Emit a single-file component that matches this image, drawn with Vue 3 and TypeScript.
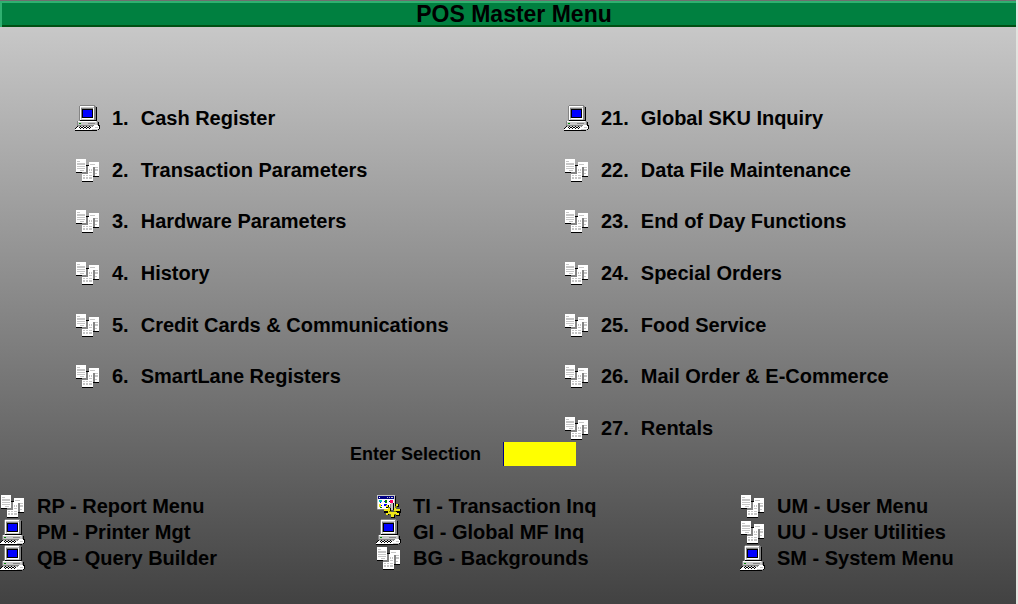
<script setup lang="ts">
import { ref } from 'vue'

type IconName = 'terminal' | 'papers' | 'inquiry'
interface Entry {
  code: string
  label: string
  icon: IconName
}
type Block = [x: number, y: number, w: number, h: number, fill: string]

const K = '#000000'
const W = '#ffffff'
const L = '#c6c6c6'
const G = '#848484'
const B = '#0000ff'
const N = '#000084'
const Y = '#f0e818'
const O = '#848400'

/* Icons are drawn on a 26 by 26 grid, one unit per pixel. */
const icons: Record<IconName, Block[]> = {
  terminal: [
    [5, 0, 15, 1, G], [4, 1, 1, 15, G], [5, 1, 15, 15, L], [5, 1, 14, 1, W], [5, 1, 1, 14, W],
    [19, 1, 2, 15, G], [21, 2, 1, 14, K], [7, 3, 11, 1, G], [6, 3, 1, 10, G],
    [7, 4, 11, 9, K], [8, 5, 9, 7, B], [18, 3, 1, 11, W], [7, 13, 12, 1, W],
    [5, 15, 16, 1, K],
    [3, 16, 19, 5, L], [2, 16, 1, 5, G], [3, 16, 18, 1, W], [22, 16, 1, 5, G], [23, 17, 1, 4, K],
    [4, 18, 2, 1, '#008400'], [13, 18, 7, 1, G], [3, 20, 19, 1, G],
    [2, 21, 17, 1, L], [1, 22, 17, 1, W], [1, 23, 17, 1, W], [0, 24, 17, 1, W], [0, 25, 17, 1, K],
    [2, 21, 1, 1, K], [1, 22, 1, 1, K], [0, 23, 1, 1, K],
    [5, 21, 1, 1, K], [8, 21, 1, 1, K], [11, 21, 1, 1, K], [14, 21, 1, 1, K],
    [4, 22, 1, 1, K], [6, 22, 2, 1, K], [9, 22, 2, 1, K], [12, 22, 2, 1, K], [15, 22, 1, 1, K],
    [5, 23, 1, 1, K], [8, 23, 1, 1, K], [11, 23, 1, 1, K], [14, 23, 1, 1, K],
    [19, 20, 4, 1, W], [18, 21, 6, 1, W], [17, 22, 7, 1, W], [17, 23, 7, 1, W], [17, 24, 6, 1, L], [17, 25, 5, 1, K],
    [17, 21, 1, 1, G], [24, 20, 1, 4, K], [23, 24, 1, 1, K], [20, 22, 3, 1, L],
  ],
  papers: [
    [14, 5, 10, 14, W], [14, 19, 10, 1, K], [15, 7, 5, 1, L], [15, 10, 8, 1, L], [20, 12, 3, 2, L], [20, 16, 2, 1, L],
    [18, 10, 2, 9, G], [11, 8, 3, 1, K], [7, 11, 11, 13, W], [13, 9, 5, 2, W], [7, 24, 11, 1, K],
    [11, 9, 2, 7, G], [7, 15, 6, 2, G],
    [14, 12, 1, 2, L], [16, 12, 1, 2, L], [14, 15, 3, 1, L],
    [8, 18, 2, 1, L], [11, 18, 2, 1, L], [14, 18, 3, 1, L],
    [8, 20, 2, 2, L], [11, 20, 2, 2, L], [14, 20, 3, 2, L],
    [1, 2, 10, 13, W], [1, 15, 6, 1, K], [2, 4, 3, 1, L], [2, 6, 8, 2, L], [2, 9, 8, 1, L], [2, 11, 8, 1, L], [5, 13, 4, 1, L],
  ],
  inquiry: [
    [1, 2, 18, 15, L], [2, 3, 16, 3, N], [3, 4, 1, 1, W], [11, 4, 1, 1, L], [13, 4, 1, 1, L], [15, 4, 2, 1, L],
    [2, 6, 16, 10, W], [1, 16, 18, 1, G], [19, 3, 1, 14, K],
    [3, 7, 3, 2, '#00c6c6'], [4, 9, 1, 1, B], [9, 7, 2, 3, '#008400'], [8, 8, 1, 1, B], [14, 7, 3, 3, '#ff0066'], [13, 8, 1, 1, N],
    [3, 11, 2, 3, Y], [5, 12, 1, 1, B], [8, 11, 3, 2, B], [4, 14, 2, 1, '#008400'],
    [15, 10, 2, 7, L], [17, 10, 1, 7, K], [14, 11, 1, 5, G],
    [10, 12, 3, 3, K], [10, 12, 2, 2, Y], [12, 14, 2, 2, O], [20, 11, 3, 3, K], [20, 11, 2, 2, Y], [19, 13, 2, 2, O],
    [8, 16, 5, 4, K], [8, 16, 4, 2, Y], [12, 15, 2, 4, Y], [14, 15, 1, 4, K], [13, 18, 2, 2, O],
    [20, 16, 5, 4, K], [20, 16, 4, 2, Y], [18, 15, 2, 4, Y], [18, 18, 2, 2, O],
    [14, 19, 5, 2, Y], [14, 21, 5, 1, O], [10, 19, 3, 3, K], [10, 20, 2, 2, Y], [12, 19, 2, 2, Y],
    [15, 21, 3, 3, Y], [18, 22, 1, 3, K], [15, 24, 3, 1, K], [19, 19, 2, 2, Y], [20, 20, 4, 3, K], [20, 20, 3, 2, Y],
  ],
}

const leftMenu: Entry[] = [
  { code: '1.', label: 'Cash Register', icon: 'terminal' },
  { code: '2.', label: 'Transaction Parameters', icon: 'papers' },
  { code: '3.', label: 'Hardware Parameters', icon: 'papers' },
  { code: '4.', label: 'History', icon: 'papers' },
  { code: '5.', label: 'Credit Cards & Communications', icon: 'papers' },
  { code: '6.', label: 'SmartLane Registers', icon: 'papers' },
]
const rightMenu: Entry[] = [
  { code: '21.', label: 'Global SKU Inquiry', icon: 'terminal' },
  { code: '22.', label: 'Data File Maintenance', icon: 'papers' },
  { code: '23.', label: 'End of Day Functions', icon: 'papers' },
  { code: '24.', label: 'Special Orders', icon: 'papers' },
  { code: '25.', label: 'Food Service', icon: 'papers' },
  { code: '26.', label: 'Mail Order & E-Commerce', icon: 'papers' },
  { code: '27.', label: 'Rentals', icon: 'papers' },
]
const shortcuts: Entry[][] = [
  [
    { code: 'RP', label: 'Report Menu', icon: 'papers' },
    { code: 'PM', label: 'Printer Mgt', icon: 'terminal' },
    { code: 'QB', label: 'Query Builder', icon: 'terminal' },
  ],
  [
    { code: 'TI', label: 'Transaction Inq', icon: 'inquiry' },
    { code: 'GI', label: 'Global MF Inq', icon: 'terminal' },
    { code: 'BG', label: 'Backgrounds', icon: 'papers' },
  ],
  [
    { code: 'UM', label: 'User Menu', icon: 'papers' },
    { code: 'UU', label: 'User Utilities', icon: 'papers' },
    { code: 'SM', label: 'System Menu', icon: 'terminal' },
  ],
]

const selection = ref('')

function choose(entry: Entry): void {
  selection.value = entry.code.replace('.', '')
}
</script>

<template>
  <div class="screen">
    <header class="title-bar"><h1>POS Master Menu</h1></header>

    <main class="body">
      <div class="menu">
        <ul v-for="(column, c) in [leftMenu, rightMenu]" :key="c" class="menu-column">
          <li v-for="row in 7" :key="row" class="slot">
            <button v-if="column[row - 1]" type="button" class="entry" @click="choose(column[row - 1])">
              <svg class="icon" viewBox="0 0 26 26" shape-rendering="crispEdges" aria-hidden="true">
                <rect v-for="(b, i) in icons[column[row - 1].icon]" :key="i" :x="b[0]" :y="b[1]" :width="b[2]" :height="b[3]" :fill="b[4]" />
              </svg>
              <span class="number">{{ column[row - 1].code }}</span>
              <span>{{ column[row - 1].label }}</span>
            </button>
          </li>
        </ul>
      </div>

      <form class="prompt" @submit.prevent>
        <label for="selection">Enter Selection</label>
        <input id="selection" v-model="selection" type="text" maxlength="4" autocomplete="off" />
      </form>
    </main>

    <nav class="shortcuts">
      <ul v-for="(group, g) in shortcuts" :key="g">
        <li v-for="entry in group" :key="entry.code" class="slot">
          <button type="button" class="entry" @click="choose(entry)">
            <svg class="icon" viewBox="0 0 26 26" shape-rendering="crispEdges" aria-hidden="true">
              <rect v-for="(b, i) in icons[entry.icon]" :key="i" :x="b[0]" :y="b[1]" :width="b[2]" :height="b[3]" :fill="b[4]" />
            </svg>
            <span>{{ entry.code }} - {{ entry.label }}</span>
          </button>
        </li>
      </ul>
    </nav>
  </div>
</template>

<style>
body {
  margin: 0;
}
</style>

<style scoped>
.screen {
  box-sizing: border-box;
  display: flex;
  flex-direction: column;
  min-height: 100vh;
  border-right: 2px solid #e4e4e0;
  background: linear-gradient(#cecece, #424242);
  color: #000;
  font: bold 20px/26px "Liberation Sans", Arial, sans-serif;
}
.title-bar {
  padding-left: 12px;
  border-top: 1px solid #6e6e6e;
  background: #008040;
  box-shadow: inset 2px 2px #2fb070, inset 0 -2px #005014;
}
h1 {
  margin: 0;
  font-size: 23px;
  line-height: 26px;
  text-align: center;
}
ul {
  margin: 0;
  padding: 0;
  list-style: none;
}
.body {
  flex: 1;
  display: flex;
  flex-direction: column;
  padding-top: 78px;
}
.menu {
  flex: 1;
  display: grid;
  grid-template-columns: 489fr 452fr;
  padding-left: 75px;
}
.menu-column {
  display: flex;
  flex-direction: column;
  justify-content: space-between;
}
.slot {
  height: 26px;
}
.entry {
  display: flex;
  align-items: center;
  padding: 0;
  border: 0;
  background: none;
  color: inherit;
  font: inherit;
  white-space: nowrap;
  cursor: pointer;
}
.icon {
  flex: none;
  width: 26px;
  height: 26px;
  margin-right: 11px;
}
.number {
  margin-right: 12px;
}
.prompt {
  display: flex;
  align-items: center;
  height: 26px;
  padding-left: 350px;
  font-size: 18px;
}
.prompt label {
  width: 153px;
}
.prompt input {
  box-sizing: border-box;
  width: 73px;
  height: 24px;
  padding: 0 4px;
  border: 0;
  border-left: 1px solid #000084;
  border-radius: 0;
  outline: 0;
  background: #ffff00;
  color: #000;
  font: inherit;
}
.shortcuts {
  display: grid;
  grid-template-columns: 376fr 364fr 276fr;
  padding: 26px 0 33px;
}
</style>
